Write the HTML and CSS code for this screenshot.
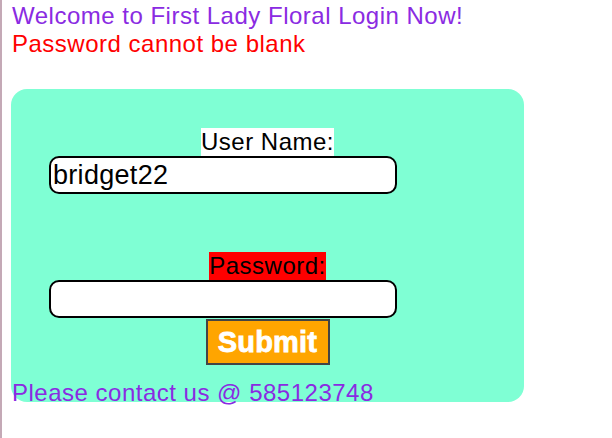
FILE: index.html
```html
<!DOCTYPE html>
<html>
<head>
<meta charset="utf-8">
<link rel="stylesheet" href="styles.css">
</head>
<body>
<div class="page">
  <div class="welcome">Welcome to First Lady Floral Login Now!</div>
  <div class="error">Password cannot be blank</div>
  <form class="card">
    <span class="label label-user">User Name:</span>
    <input class="field" type="text" value="bridget22">
    <span class="label label-pass">Password:</span>
    <input class="field" type="password" value="">
    <button class="submit" type="button">Submit</button>
    <div class="contact">Please contact us @ 585123748</div>
  </form>
</div>
</body>
</html>
```

FILE: styles.css
```css
html, body {
  margin: 0;
  padding: 0;
  background: #ffffff;
}
body {
  font-family: "Liberation Sans", Arial, sans-serif;
  font-size: 24px;
  letter-spacing: 0.5px;
  min-height: 438px;
  border-left: 2px solid #c4a9b6;
  box-sizing: border-box;
}
.page {
  padding-left: 10px;
}
.welcome {
  color: #8a2be2;
  line-height: 28px;
  padding-top: 2px;
}
.error {
  color: #ff0000;
  line-height: 28px;
}
.card {
  margin-top: 31px;
  width: 513px;
  height: 313px;
  margin-left: -1px;
  background: #7fffd4;
  border-radius: 16px;
  display: flex;
  flex-direction: column;
  align-items: flex-start;
  padding-top: 39px;
  box-sizing: border-box;
}
.label {
  align-self: center;
  line-height: 28px;
  color: #000;
}
.label-user {
  background: #ffffff;
}
.label-pass {
  background: #ff0000;
  margin-top: 58px;
}
.field {
  flex: 0 0 auto;
  margin: 0 0 0 38px;
  width: 348px;
  height: 38px;
  min-height: 38px;
  box-sizing: border-box;
  border: 2px solid #000;
  border-radius: 10px;
  background: #fff;
  font-family: "Liberation Sans", Arial, sans-serif;
  font-size: 27px;
  letter-spacing: 0.3px;
  padding: 0 2px;
  color: #000;
  outline: none;
}
.submit {
  flex: 0 0 auto;
  align-self: center;
  margin-top: 1px;
  width: 124px;
  height: 46px;
  background: #ffa500;
  border: 2px solid #444;
  color: #fff;
  font-family: "Liberation Sans", Arial, sans-serif;
  font-weight: bold;
  font-size: 29px;
  letter-spacing: 0.2px;
  -webkit-text-stroke: 0.8px #fff;
  padding: 0;
}
.contact {
  flex: 0 0 auto;
  margin-top: 14px;
  margin-left: 1px;
  color: #8a2be2;
  line-height: 28px;
}
```
